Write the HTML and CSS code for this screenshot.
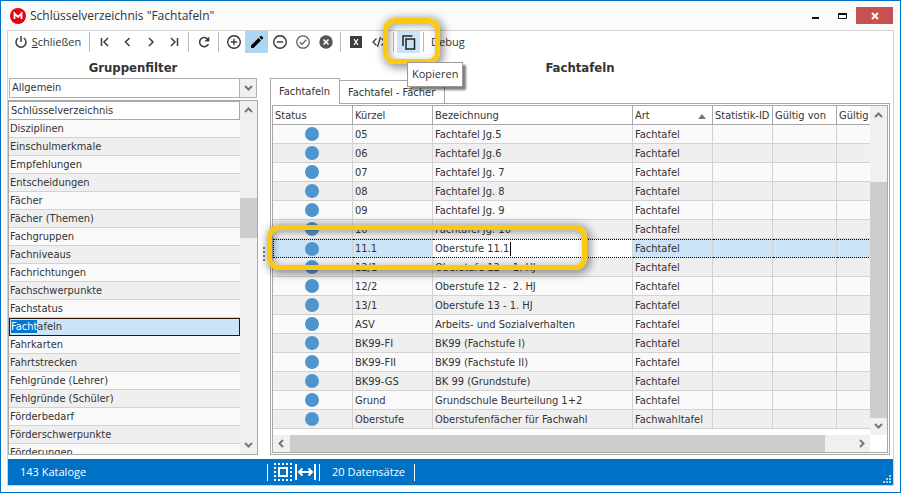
FILE: index.html
```html
<!DOCTYPE html>
<html lang="de">
<head>
<meta charset="utf-8">
<title>Schlüsselverzeichnis "Fachtafeln"</title>
<link rel="stylesheet" href="styles.css">
</head>
<body>
<svg class="defs" aria-hidden="true">
  <symbol id="up" viewBox="0 0 9 6"><path d="M1 5 4.500 1.500 8 5" fill="none" stroke="#777" stroke-width="2"/></symbol>
  <symbol id="down" viewBox="0 0 9 6"><path d="M1 1 4.500 4.500 8 1" fill="none" stroke="#777" stroke-width="2"/></symbol>
</svg>
<div class="window">
  <header class="titlebar">
    <svg class="logo" viewBox="0 0 16 16"><circle cx="8" cy="8" r="8" fill="#e2040e"/><path d="M4.500 11V5.500L8 9l3.500-3.500V11" fill="none" stroke="#fff" stroke-width="1.800"/></svg>
    <h1 class="title">Schlüsselverzeichnis "Fachtafeln"</h1>
    <button class="winbtn" aria-label="Minimieren"><svg width="9" height="9"><path d="M1 6h7v2H1z" fill="#111"/></svg></button>
    <button class="winbtn" aria-label="Maximieren"><svg width="9" height="9"><path d="M.5 2.500h8v5h-8z" fill="none" stroke="#111"/><path d="M0 2h9v2H0z" fill="#111"/></svg></button>
    <button class="winbtn close" aria-label="Fenster schließen"><svg width="8" height="8"><path d="M1 1l6 6M7 1 1 7" stroke="#fff" stroke-width="2"/></svg></button>
  </header>
  <div class="frame">
    <div class="toolbar">
      <button class="tool labelled quit"><svg width="14" height="14" viewBox="0 0 14 14"><path d="M4.200 3a5 5 0 1 0 5.600 0M7 1v6" fill="none" stroke="#3c3c3c" stroke-width="1.500"/></svg><span><u>S</u>chließen</span></button>
      <span class="sep"></span>
      <button class="tool" aria-label="Erster"><svg width="12" height="12" viewBox="0 0 12 12"><path d="M2.500 2v8M9 2 5 6l4 4" fill="none" stroke="#3c3c3c" stroke-width="1.500"/></svg></button>
      <button class="tool" aria-label="Zurück"><svg width="12" height="12" viewBox="0 0 12 12"><path d="M7.500 2l-4 4 4 4" fill="none" stroke="#3c3c3c" stroke-width="1.500"/></svg></button>
      <button class="tool" aria-label="Weiter"><svg width="12" height="12" viewBox="0 0 12 12"><path d="M4 2l4 4-4 4" fill="none" stroke="#3c3c3c" stroke-width="1.500"/></svg></button>
      <button class="tool" aria-label="Letzter"><svg width="12" height="12" viewBox="0 0 12 12"><path d="M9.500 2v8M3 2l4 4-4 4" fill="none" stroke="#3c3c3c" stroke-width="1.500"/></svg></button>
      <span class="sep"></span>
      <button class="tool" aria-label="Aktualisieren"><svg width="14" height="14" viewBox="0 0 14 14"><path d="M11 4.500A4.600 4.600 0 1 0 11.400 9" fill="none" stroke="#3c3c3c" stroke-width="1.500"/><path d="M12.300 1.500v5h-5z" fill="#3c3c3c"/></svg></button>
      <span class="sep"></span>
      <button class="tool" aria-label="Hinzufügen"><svg width="14" height="14" viewBox="0 0 14 14"><path d="M7 .8a6.200 6.200 0 1 0 .01 0M7 3.800v6.400M3.800 7h6.400" fill="none" stroke="#3c3c3c" stroke-width="1.400"/></svg></button>
      <button class="tool pressed" aria-label="Bearbeiten"><svg width="14" height="14" viewBox="0 0 14 14"><path d="M1 10.500 8.500 3 11 5.500 3.500 13H1zM9.300 2.200l1.200-1.200q.5-.4 1 0L13 2.500q.4.500 0 1L11.800 4.700z" fill="#000"/></svg></button>
      <button class="tool" aria-label="Entfernen"><svg width="14" height="14" viewBox="0 0 14 14"><path d="M7 .8a6.200 6.200 0 1 0 .01 0M3.800 7h6.400" fill="none" stroke="#3c3c3c" stroke-width="1.400"/></svg></button>
      <button class="tool" aria-label="Übernehmen"><svg width="14" height="14" viewBox="0 0 14 14"><path d="M7 .8a6.200 6.200 0 1 0 .01 0M3.800 7.200 6 9.300l4.400-4.500" fill="none" stroke="#666" stroke-width="1.300"/></svg></button>
      <button class="tool" aria-label="Verwerfen"><svg width="14" height="14" viewBox="0 0 14 14"><circle cx="7" cy="7" r="6.700" fill="#555"/><path d="M4.500 4.500l5 5M9.500 4.500l-5 5" stroke="#fff" stroke-width="1.600"/></svg></button>
      <span class="sep"></span>
      <button class="tool" aria-label="Excel"><svg width="12" height="12" viewBox="0 0 12 12"><path d="M0 0h12v12H0z" fill="#3c3c3c"/><path d="M4 3l4 6M8 3 4 9" stroke="#fff" stroke-width="1.300"/></svg></button>
      <button class="tool" aria-label="Code"><svg width="14" height="12" viewBox="0 0 14 12"><path d="M4.500 2.500 1 6l3.500 3.500M9.500 2.500 13 6 9.500 9.500M8.500 1l-3 10" fill="none" stroke="#3c3c3c" stroke-width="1.300"/></svg></button>
      <span class="sep"></span>
      <button class="tool hover" aria-label="Kopieren"><svg width="14" height="15" viewBox="0 0 14 15"><path d="M1 11V1h9.500M4 4h8.500v10H4z" fill="none" stroke="#222" stroke-width="1.500"/></svg>
        <span class="ring ring-tool"></span><span class="tip">Kopieren</span></button>
      <span class="sep"></span>
      <button class="tool labelled">Debug</button>
    </div>

    <main class="panes">
      <section class="left">
        <h2>Gruppenfilter</h2>
        <div class="combo">
          <select aria-label="Gruppenfilter"><option>Allgemein</option></select>
          <span class="combo-arrow"><svg width="9" height="6"><use href="#down"/></svg></span>
        </div>
        <div class="list">
          <div class="list-view">
            <table class="catalog">
              <thead><tr><th>Schlüsselverzeichnis</th></tr></thead>
              <tbody>
                <tr><td>Disziplinen</td></tr>
                <tr><td>Einschulmerkmale</td></tr>
                <tr><td>Empfehlungen</td></tr>
                <tr><td>Entscheidungen</td></tr>
                <tr><td>Fächer</td></tr>
                <tr><td>Fächer (Themen)</td></tr>
                <tr><td>Fachgruppen</td></tr>
                <tr><td>Fachniveaus</td></tr>
                <tr><td>Fachrichtungen</td></tr>
                <tr><td>Fachschwerpunkte</td></tr>
                <tr><td>Fachstatus</td></tr>
                <tr class="current"><td><mark>Facht</mark>afeln</td></tr>
                <tr><td>Fahrkarten</td></tr>
                <tr><td>Fahrtstrecken</td></tr>
                <tr><td>Fehlgründe (Lehrer)</td></tr>
                <tr><td>Fehlgründe (Schüler)</td></tr>
                <tr><td>Förderbedarf</td></tr>
                <tr><td>Förderschwerpunkte</td></tr>
                <tr><td>Förderungen</td></tr>
              </tbody>
            </table>
          </div>
          <div class="vbar list-bar"><svg width="9" height="6"><use href="#up"/></svg><span class="thumb"></span><svg width="9" height="6"><use href="#down"/></svg></div>
        </div>
      </section>

      <div class="splitter"><i></i><i></i><i></i><i></i></div>

      <section class="right">
        <h2>Fachtafeln</h2>
        <div class="tabs">
          <button class="tab active">Fachtafeln</button>
          <button class="tab">Fachtafel - Fächer</button>
          <span class="tab-rest"></span>
        </div>
        <div class="page">
          <div class="grid">
            <div class="grid-view">
              <table class="records">
                <colgroup><col class="c-status"><col class="c-key"><col class="c-name"><col class="c-key"><col class="c-stat"><col class="c-date"><col class="c-date"></colgroup>
                <thead><tr><th>Status</th><th>Kürzel</th><th>Bezeichnung</th><th class="sorted">Art<svg width="8" height="5"><path d="M0 5 4 0l4 5z" fill="#777"/></svg></th><th>Statistik-ID</th><th>Gültig von</th><th>Gültig bis</th></tr></thead>
                <tbody>
                  <tr><td><i class="dot"></i></td><td>05</td><td>Fachtafel Jg.5</td><td>Fachtafel</td><td></td><td></td><td></td></tr>
                  <tr><td><i class="dot"></i></td><td>06</td><td>Fachtafel Jg.6</td><td>Fachtafel</td><td></td><td></td><td></td></tr>
                  <tr><td><i class="dot"></i></td><td>07</td><td>Fachtafel Jg. 7</td><td>Fachtafel</td><td></td><td></td><td></td></tr>
                  <tr><td><i class="dot"></i></td><td>08</td><td>Fachtafel Jg. 8</td><td>Fachtafel</td><td></td><td></td><td></td></tr>
                  <tr><td><i class="dot"></i></td><td>09</td><td>Fachtafel Jg. 9</td><td>Fachtafel</td><td></td><td></td><td></td></tr>
                  <tr><td><i class="dot"></i></td><td>10</td><td>Fachtafel Jg. 10</td><td>Fachtafel</td><td></td><td></td><td></td></tr>
                  <tr class="selected"><td><i class="dot"></i><span class="ring ring-row"></span></td><td>11.1</td><td class="editing"><input class="cell-input" aria-label="Bezeichnung" value="Oberstufe 11.1"></td><td>Fachtafel</td><td></td><td></td><td></td></tr>
                  <tr><td><i class="dot"></i></td><td>12/1</td><td>Oberstufe 12 -&nbsp; 1. HJ</td><td>Fachtafel</td><td></td><td></td><td></td></tr>
                  <tr><td><i class="dot"></i></td><td>12/2</td><td>Oberstufe 12 -&nbsp; 2. HJ</td><td>Fachtafel</td><td></td><td></td><td></td></tr>
                  <tr><td><i class="dot"></i></td><td>13/1</td><td>Oberstufe 13 - 1. HJ</td><td>Fachtafel</td><td></td><td></td><td></td></tr>
                  <tr><td><i class="dot"></i></td><td>ASV</td><td>Arbeits- und Sozialverhalten</td><td>Fachtafel</td><td></td><td></td><td></td></tr>
                  <tr><td><i class="dot"></i></td><td>BK99-FI</td><td>BK99 (Fachstufe I)</td><td>Fachtafel</td><td></td><td></td><td></td></tr>
                  <tr><td><i class="dot"></i></td><td>BK99-FII</td><td>BK99 (Fachstufe II)</td><td>Fachtafel</td><td></td><td></td><td></td></tr>
                  <tr><td><i class="dot"></i></td><td>BK99-GS</td><td>BK 99 (Grundstufe)</td><td>Fachtafel</td><td></td><td></td><td></td></tr>
                  <tr><td><i class="dot"></i></td><td>Grund</td><td>Grundschule Beurteilung 1+2</td><td>Fachtafel</td><td></td><td></td><td></td></tr>
                  <tr><td><i class="dot"></i></td><td>Oberstufe</td><td>Oberstufenfächer für Fachwahl</td><td>Fachwahltafel</td><td></td><td></td><td></td></tr>
                </tbody>
              </table>
            </div>
            <div class="vbar grid-bar"><svg width="9" height="6"><use href="#up"/></svg><span class="thumb"></span><svg width="9" height="6"><use href="#down"/></svg></div>
            <div class="hbar"><svg width="6" height="9"><path d="M5 1 1.500 4.500 5 8" fill="none" stroke="#777" stroke-width="2"/></svg><span class="thumb"></span><svg width="6" height="9"><path d="M1 1l3.500 3.500L1 8" fill="none" stroke="#777" stroke-width="2"/></svg></div>
          </div>
        </div>
      </section>
    </main>

    <footer class="status">
      <span class="count">143 Kataloge</span>
      <span class="bar"></span>
      <svg class="sel-icon" width="18" height="18" viewBox="0 0 18 18"><path d="M0 1h18M0 17h18M1 0v18M17 0v18" fill="none" stroke="#fff" stroke-width="2" stroke-dasharray="2 2"/><path d="M5 5h8v8H5z" fill="none" stroke="#fff" stroke-width="2"/></svg>
      <svg class="width-icon" width="21" height="18" viewBox="0 0 21 18"><path d="M1 1v16M20 1v16" stroke="#fff" stroke-width="2"/><path d="M4 9h13M7.500 5.500 4 9l3.500 3.500M13.500 5.500 17 9l-3.500 3.500" fill="none" stroke="#fff" stroke-width="2"/></svg>
      <span class="bar"></span>
      <span class="records-count">20 Datensätze</span>
      <span class="bar"></span>
      <svg class="grip" width="8" height="8"><path d="M6 0h2v2H6zM3 3h2v2H3zM6 3h2v2H6zM0 6h2v2H0zM3 6h2v2H3zM6 6h2v2H6z" fill="#b4cfe4"/></svg>
    </footer>
  </div>
</div>
</body>
</html>
```
FILE: styles.css
```css
* { box-sizing: border-box; }
body {
  margin: 0;
  font: 11px/16px "DejaVu Sans Condensed", Tahoma, sans-serif;
  color: #333;
}
button, input, select { font: inherit; color: inherit; margin: 0; padding: 0; border: 0; background: none; }
.defs { display: none; }
svg { display: block; flex: none; }

.window {
  height: 100vh;
  display: flex;
  flex-direction: column;
  padding: 0 6px 6px;
  border: 1px solid #0072c6;
  background: #fbfbfb;
  overflow: hidden;
}
.titlebar { display: flex; align-items: center; height: 29px; flex: none; padding-right: 1px; }
.logo { width: 16px; height: 16px; margin: 0 4px 0 3px; }
.title { flex: 1; margin: 0; font: 12px/20px "Open Sans", "Noto Sans", sans-serif; }
.winbtn { width: 27px; height: 17px; display: grid; place-items: center; }
.winbtn.close { width: 37px; background: #c75050; }

.frame {
  flex: 1;
  min-height: 0;
  display: flex;
  flex-direction: column;
  border: 1px solid #d2d2d2;
  border-bottom: 0;
  background: #fff;
}
.toolbar { display: flex; height: 22px; flex: none; padding-left: 1px; font: 11px/16px "Open Sans", "Noto Sans", sans-serif; }
.tool { position: relative; width: 23px; display: flex; align-items: center; justify-content: center; }
.tool.labelled { width: auto; gap: 4px; padding: 0 4px; }
.tool.quit { width: 77px; }
.tool.pressed { background: #add6f2; }
.tool.hover { background: #cce4f7; }
.sep { width: 1px; height: 20px; margin: 1px 3px; background: #bbb; }
.tip {
  position: absolute;
  z-index: 3;
  left: 10px;
  top: 31px;
  padding: 3px 4px 4px;
  border: 1px solid #999;
  background: #fff;
  box-shadow: 3px 3px 2px rgba(0, 0, 0, .5);
}
.ring {
  position: absolute;
  z-index: 2;
  border: 5px solid #fdc90f;
  border-radius: 12px;
  box-shadow: 2px 2px 8px 2px rgba(0, 0, 0, .4), inset 2px 2px 7px rgba(0, 0, 0, .35);
  pointer-events: none;
}
.ring-tool { left: -14px; top: -13px; width: 57px; height: 46px; }
.ring-row { left: -7px; top: -15px; width: 320px; height: 45px; }

.panes { flex: 1; min-height: 0; display: flex; padding: 0 3px 4px 0; }
h2 { margin: 0; height: 25px; font-size: 13px; line-height: 30px; font-weight: bold; text-align: center; flex: none; }
.left { width: 250px; display: flex; flex-direction: column; min-height: 0; }
.combo { position: relative; height: 20px; margin: 0 1px 2px; flex: none; }
.combo select { width: 100%; height: 20px; padding-left: 2px; border: 1px solid #b0b0b0; appearance: none; background: #fff; }
.combo-arrow {
  position: absolute;
  right: 0;
  top: 0;
  width: 18px;
  height: 20px;
  display: grid;
  place-items: center;
  border: 1px solid #b0b0b0;
  background: #f0f0f0;
  pointer-events: none;
}
.list { flex: 1; min-height: 0; display: flex; border: 1px solid #a8a8a8; }
.list-view { flex: 1; overflow: hidden; }
table { border-collapse: separate; border-spacing: 0; table-layout: fixed; width: 100%; }
th { font-weight: normal; text-align: left; background: #fff; }
th, td { padding: 1px 1px 0; white-space: nowrap; }
.catalog th { height: 19px; border: 1px solid #a8a8a8; border-left: 0; padding-left: 2px; }
.catalog td { height: 18px; border-bottom: 1px solid #d2d2d2; background: #fafafa; }
.catalog tr:nth-child(even) td { background: #efefef; }
.catalog .current td { border: 1px solid #301505; padding: 0 0 0 1px; background: #cce4f7; }
.catalog tr:nth-child(even).current td { background: #cce4f7; }
mark { background: #0078d7; color: #fff; }

.vbar { width: 17px; display: flex; flex-direction: column; align-items: center; background: #f0f0f0; padding: 6px 0; }
.vbar .thumb { width: 17px; background: #cdcdcd; }
.list-bar { justify-content: space-between; }
.list-bar .thumb { height: 40px; margin-bottom: 119px; }

.splitter { width: 12px; display: flex; flex-direction: column; justify-content: center; align-items: center; gap: 2px; }
.splitter i { width: 2px; height: 2px; background: #777; }

.right { flex: 1; min-width: 0; display: flex; flex-direction: column; min-height: 0; }
.tabs { display: flex; height: 26px; flex: none; align-items: flex-end; }
.tab { height: 24px; padding: 1px 9px 0 8px; border: 1px solid #a8a8a8; border-left: 0; background: #fff; }
.tab.active { height: 26px; border-left: 1px solid #a8a8a8; border-bottom: 0; }
.tab-rest { flex: 1; border-bottom: 1px solid #a8a8a8; }
.page { flex: 1; min-height: 0; display: flex; padding: 1px; border: 1px solid #a8a8a8; border-top: 0; }
.grid {
  flex: 1;
  min-width: 0;
  display: grid;
  grid-template: 1fr 17px / 1fr 17px;
  border: 1px solid #a8a8a8;
}
.grid-view { min-width: 0; min-height: 0; clip-path: inset(0 0 0 -20px); }
.records { width: 628px; }
.c-status { width: 80px; }
.c-key { width: 80px; }
.c-name { width: 200px; }
.c-stat { width: 60px; }
.c-date { width: 64px; }
.records th { height: 19px; border-right: 1px solid #a8a8a8; border-bottom: 1px solid #a8a8a8; padding-left: 2px; }
.records td { height: 19px; line-height: 14px; border-right: 1px solid #d2d2d2; border-bottom: 1px solid #d2d2d2; background: #fafafa; padding-left: 2px; }
.records tr:nth-child(even) td { background: #efefef; }
.sorted svg { float: right; margin: 6px 5px 0 0; }
.records td:first-child { padding: 0 2px 0 0; }
.dot { display: block; width: 14px; height: 14px; margin: 0 auto; border-radius: 50%; background: #4f94cd; }
.records .selected td { border-top: 1px dotted #000; border-bottom: 1px dotted #000; background: #cce4f7; }
.records .selected td:first-child { position: relative; border-left: 1px dotted #000; }
.records .selected .editing { background: #fff; }
.cell-input { display: block; width: 76px; height: 14px; border-right: 1px solid #000; }
.grid-bar .thumb { flex: 1; margin: 64px 0 5px; }
.hbar { display: flex; align-items: center; justify-content: space-between; background: #f0f0f0; padding: 0 5px; }
.hbar .thumb { flex: 1; height: 17px; margin: 0 34px 0 6px; background: #cdcdcd; }

.status {
  height: 27px;
  flex: none;
  display: flex;
  align-items: center;
  border-bottom: 1px solid #d2d2d2;
  background: #0072c6;
  color: #fff;
  font: 11px/16px "Open Sans", "Noto Sans", sans-serif;
}
.count { width: 247px; margin-left: 12px; }
.bar { width: 1px; height: 17px; background: #fff; }
.sel-icon { margin: 0 3px 0 6px; }
.width-icon { margin-right: 3px; }
.records-count { margin: 0 9px 0 12px; }
.grip { margin: 14px 2px 0 auto; }
```
